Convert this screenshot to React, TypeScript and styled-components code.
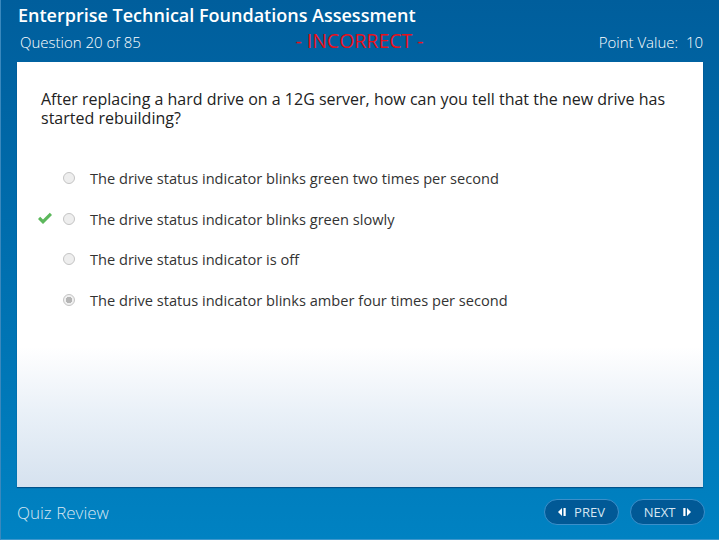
import React from "react";
import styled, { createGlobalStyle } from "styled-components";

const GlobalStyle = createGlobalStyle`
  html, body {
    margin: 0;
    padding: 0;
    background: #0070b0;
  }
  * {
    box-sizing: border-box;
  }
`;

type OptionProps = {
  correct?: boolean;
  selected?: boolean;
};

const options = [
  { text: "The drive status indicator blinks green two times per second" },
  { text: "The drive status indicator blinks green slowly", correct: true },
  { text: "The drive status indicator is off" },
  {
    text: "The drive status indicator blinks amber four times per second",
    selected: true,
  },
];

function App() {
  return (
    <Frame>
      <GlobalStyle />
      <Header>
        <Title>Enterprise Technical Foundations Assessment</Title>
        <SubRow>
          <Counter>Question 20 of 85</Counter>
          <Result>- INCORRECT -</Result>
          <Points>Point Value:&nbsp; 10</Points>
        </SubRow>
      </Header>
      <Panel>
        <Question>
          After replacing a hard drive on a 12G server, how can you tell that the
          new drive has started rebuilding?
        </Question>
        <OptionList>
          {options.map((o) => (
            <Option key={o.text}>
              <CheckSlot>
                {o.correct && (
                  <svg width="16" height="13" viewBox="0 0 16 13">
                    <path
                      d="M1 7 L3.2 4.8 L6 7.6 L12.8 0.8 L15 3 L6 12 Z"
                      fill="#5cb85c"
                    />
                  </svg>
                )}
              </CheckSlot>
              <Radio selected={o.selected} />
              <OptionText>{o.text}</OptionText>
            </Option>
          ))}
        </OptionList>
      </Panel>
      <Footer>
        <FooterLabel>Quiz Review</FooterLabel>
        <NavGroup>
          <NavButton>
            <svg width="10" height="10" viewBox="0 0 10 10">
              <path d="M0 5 L4 1 L4 9 Z" fill="#fff" />
              <rect x="5.5" y="1" width="2.2" height="8" fill="#fff" />
            </svg>
            PREV
          </NavButton>
          <NavButton>
            NEXT
            <svg width="10" height="10" viewBox="0 0 10 10">
              <rect x="2.3" y="1" width="2.2" height="8" fill="#fff" />
              <path d="M10 5 L6 1 L6 9 Z" fill="#fff" />
            </svg>
          </NavButton>
        </NavGroup>
      </Footer>
    </Frame>
  );
}

const Frame = styled.div`
  width: 719px;
  height: 540px;
  display: flex;
  flex-direction: column;
  background: linear-gradient(#005e9c 0%, #006cac 40%, #0082c2 100%);
  border-left: 1px solid #3a88bd;
  border-bottom: 1px solid #3f97cc;
  font-family: "Open Sans", "Liberation Sans", sans-serif;
  overflow: hidden;
`;

const Header = styled.div`
  height: 62px;
  padding: 3px 16px 0 17px;
  color: #ffffff;
`;

const Title = styled.div`
  font-size: 18px;
  font-weight: 600;
  line-height: 25px;
`;

const SubRow = styled.div`
  display: grid;
  grid-template-columns: 1fr auto 1fr;
  align-items: baseline;
  margin-top: 2px;
  padding-left: 2px;
  font-size: 15px;
  line-height: 22px;
  white-space: nowrap;
`;

const Counter = styled.span`
  font-weight: 300;
`;

const Result = styled.span`
  color: #e8101a;
  font-family: "Open Sans", "Liberation Sans", sans-serif;
  font-size: 19.5px;
  font-weight: 400;
  position: relative;
  top: 0;
  margin-right: 4px;
`;

const Points = styled.span`
  font-weight: 300;
  text-align: right;
`;

const Panel = styled.div`
  height: 425px;
  margin: 0 16px 0 16px;
  padding: 28px 24px 0 24px;
  background: linear-gradient(
    #ffffff 0%,
    #ffffff 67%,
    #f4f7fb 75%,
    #eaf1f8 82%,
    #d6e2ef 100%
  );
  box-shadow: 0 1px 1px rgba(0, 40, 90, 0.5);
`;

const Question = styled.div`
  font-size: 16px;
  line-height: 19px;
  color: #222222;
  max-width: 660px;
`;

const OptionList = styled.div`
  display: flex;
  flex-direction: column;
  gap: 20.7px;
  margin-top: 40px;
`;

const Option = styled.div<OptionProps>`
  display: flex;
  align-items: center;
  height: 20px;
  margin-left: -4px;
`;

const CheckSlot = styled.div`
  width: 26px;
  display: flex;
  align-items: center;
`;

const Radio = styled.span<OptionProps>`
  width: 12px;
  height: 12px;
  border-radius: 50%;
  border: 1px solid #c4c4c4;
  background: ${(p) =>
    p.selected
      ? "radial-gradient(circle, #b5b5b5 0 3px, #f0f0f0 3.5px)"
      : "#eeeeee"};
  margin-right: 15px;
  flex-shrink: 0;
`;

const OptionText = styled.span`
  font-size: 14.6px;
  color: #333333;
`;

const Footer = styled.div`
  flex: 1;
  display: flex;
  align-items: center;
  justify-content: space-between;
  padding: 0 14px 2px 16px;
`;

const FooterLabel = styled.span`
  font-size: 17px;
  font-weight: 300;
  color: #d6e6f2;
`;

const NavGroup = styled.div`
  display: flex;
  gap: 11px;
`;

const NavButton = styled.button`
  width: 75px;
  height: 26px;
  border-radius: 13px;
  border: 1px solid #3b8fca;
  background: #015996;
  color: #d6e6f2;
  font-family: "Open Sans", "Liberation Sans", sans-serif;
  font-size: 13px;
  display: flex;
  align-items: center;
  justify-content: center;
  gap: 6px;
  padding: 0;
`;

export default App;
